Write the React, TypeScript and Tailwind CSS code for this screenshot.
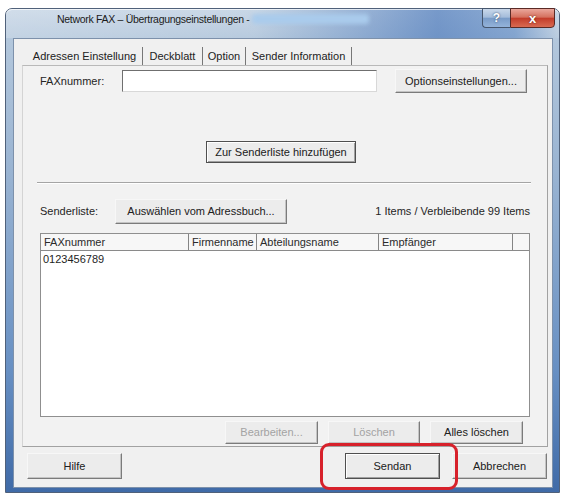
import React from "react";

interface BtnProps {
  width: string;
  children: React.ReactNode;
  disabled?: boolean;
  isDefault?: boolean;
  height?: string;
}

function Btn({ width, children, disabled = false, isDefault = false, height = "h-[23px]" }: BtnProps) {
  const edge = isDefault
    ? "border border-[#4f4f4f] shadow-[inset_1px_1px_0_#ffffff,inset_-1px_-1px_0_#a0a0a0]"
    : "border border-t-[#f7f7f7] border-l-[#f7f7f7] border-r-[#7b7b7b] border-b-[#7b7b7b] shadow-[inset_-1px_-1px_0_#c4c4c4]";
  return (
    <div
      className={`${width} ${height} ${edge} bg-[#ececec] flex items-center justify-center shrink-0 ${
        disabled ? "text-[#a3a3a3]" : "text-[#202020]"
      }`}
    >
      {children}
    </div>
  );
}

const columns = [
  { label: "FAXnummer", w: "w-[148px]" },
  { label: "Firmenname", w: "w-[68px]" },
  { label: "Abteilungsname", w: "w-[122px]" },
  { label: "Empfänger", w: "w-[134px]" },
];

const tabs = [
  { label: "Adressen Einstellung", w: "w-[116px]" },
  { label: "Deckblatt", w: "w-[60px]" },
  { label: "Option", w: "w-[43px]" },
  { label: "Sender Information", w: "w-[106px]" },
];

export default function App() {
  return (
    <div className="relative w-[567px] h-[498px] overflow-hidden bg-white pt-[8px] pl-[5px] font-['Liberation_Sans',Arial,sans-serif] text-[11px] leading-[13px] text-[#252525]">
      {/* window frame */}
      <div className="w-[555px] h-[485px] flex flex-col rounded-t-[7px] border border-[#50617a] bg-[linear-gradient(180deg,#c6d5e5_0px,#b3c7dc_30px,#9ab4d2_160px,#6890c3_360px,#3f6aa7_485px)]">
        {/* title bar */}
        <div className="relative h-[29px] flex items-start rounded-t-[6px] bg-[linear-gradient(90deg,rgba(255,255,255,0.2)_0%,rgba(255,255,255,0.05)_45%,rgba(55,105,180,0.55)_78%,rgba(70,120,190,0.45)_92%,rgba(255,255,255,0.1)_100%)] shadow-[inset_0_1px_0_rgba(255,255,255,0.7)]">
          <div className="pl-[51px] pt-[4px] text-[10.5px] leading-[12px] tracking-[-0.3px] text-[#1b1b1b] flex items-center">
            <span>Network FAX – Übertragungseinstellungen - </span>
            <span className="inline-block ml-[2px] w-[117px] h-[10px] rounded-[3px] bg-[#a9cbec] blur-[2px]" />
          </div>
          <div className="ml-auto mr-[4px] -mt-px flex">
            <div className="w-[28px] h-[20px] flex items-center justify-center rounded-bl-[4px] border border-[#46566d] border-r-0 bg-[linear-gradient(180deg,#c9d8ea_0%,#a5bddb_45%,#7a9cc8_52%,#94b3da_100%)] text-white font-bold text-[12px] [text-shadow:0_0_2px_#2a3f5f]">
              ?
            </div>
            <div className="w-[45px] h-[20px] flex items-center justify-center rounded-br-[4px] border border-[#5a2a26] bg-[linear-gradient(180deg,#eaa79c_0%,#d5715f_45%,#c33d2b_52%,#d96a52_100%)] text-white font-bold text-[13px] [text-shadow:0_0_2px_#5a1a10]">
              x
            </div>
          </div>
        </div>

        {/* client area */}
        <div className="flex-1 ml-[7px] mr-[6px] mb-[4px] bg-[#f0f0f0] border border-[#7d91ab] flex flex-col">
          {/* tabs */}
          <div className="mt-[8px] ml-[13px] h-[18px] flex">
            {tabs.map((t) => (
              <div
                key={t.label}
                className={`${t.w} h-full flex items-center justify-center border-r border-[#777] text-[#222]`}
              >
                {t.label}
              </div>
            ))}
          </div>

          {/* tab panel */}
          <div className="ml-[8px] w-[526px] h-[382px] border border-t-[#b9b9b9] border-l-[#d4d4d4] border-r-[#a2a2a2] border-b-[#a2a2a2] bg-[#f2f2f2] flex flex-col">
            <div className="mt-[3px] h-[24px] flex items-center">
              <div className="pl-[17px] w-[99px] shrink-0">FAXnummer:</div>
              <div className="w-[255px] h-[22px] bg-white border border-t-[#6f6f6f] border-l-[#6f6f6f] border-r-[#d8d8d8] border-b-[#d8d8d8]" />
              <div className="ml-[18px]">
                <Btn width="w-[132px]" height="h-[24px]">
                  Optionseinstellungen...
                </Btn>
              </div>
            </div>

            <div className="mt-[48px] ml-[183px]">
              <Btn width="w-[150px]" height="h-[22px]" isDefault>
                Zur Senderliste hinzufügen
              </Btn>
            </div>

            <div className="mt-[19px] ml-[14px] w-[494px] border-t border-t-[#a5a5a5] border-b border-b-white" />

            <div className="mt-[15px] h-[25px] flex items-center pr-[17px]">
              <div className="pl-[17px] w-[92px] shrink-0">Senderliste:</div>
              <Btn width="w-[172px]" height="h-[25px]">
                Auswählen vom Adressbuch...
              </Btn>
              <div className="ml-auto">1 Items / Verbleibende 99 Items</div>
            </div>

            {/* list view */}
            <div className="mt-[9px] ml-[17px] w-[490px] h-[184px] bg-white border border-[#8f8f8f] flex flex-col">
              <div className="h-[17px] flex bg-[#f7f7f7] border-b border-[#8a8a8a]">
                {columns.map((c) => (
                  <div
                    key={c.label}
                    className={`${c.w} h-full flex items-center pl-[3px] border-r border-[#858585] text-[#2a2a2a]`}
                  >
                    {c.label}
                  </div>
                ))}
                <div className="flex-1" />
              </div>
              <div className="h-[17px] flex items-center pl-[2px] text-[#1e1e1e]">0123456789</div>
            </div>

            <div className="mt-[4px] flex justify-end gap-[10px] pr-[24px]">
              <Btn width="w-[93px]" disabled>
                Bearbeiten...
              </Btn>
              <Btn width="w-[92px]" disabled>
                Löschen
              </Btn>
              <Btn width="w-[93px]">Alles löschen</Btn>
            </div>
          </div>

          {/* bottom buttons */}
          <div className="mt-[6px] flex pl-[13px] pr-[5px]">
            <Btn width="w-[95px]" height="h-[26px]">
              Hilfe
            </Btn>
            <div className="ml-auto flex gap-[12px]">
              <Btn width="w-[95px]" height="h-[26px]" isDefault>
                Sendan
              </Btn>
              <Btn width="w-[95px]" height="h-[26px]">
                Abbrechen
              </Btn>
            </div>
          </div>
        </div>
      </div>

      {/* red highlight around the send button */}
      <div className="absolute left-[320px] top-[443px] w-[138px] h-[47px] rounded-[9px] border-[3px] border-[#d7212b]" />
    </div>
  );
}
